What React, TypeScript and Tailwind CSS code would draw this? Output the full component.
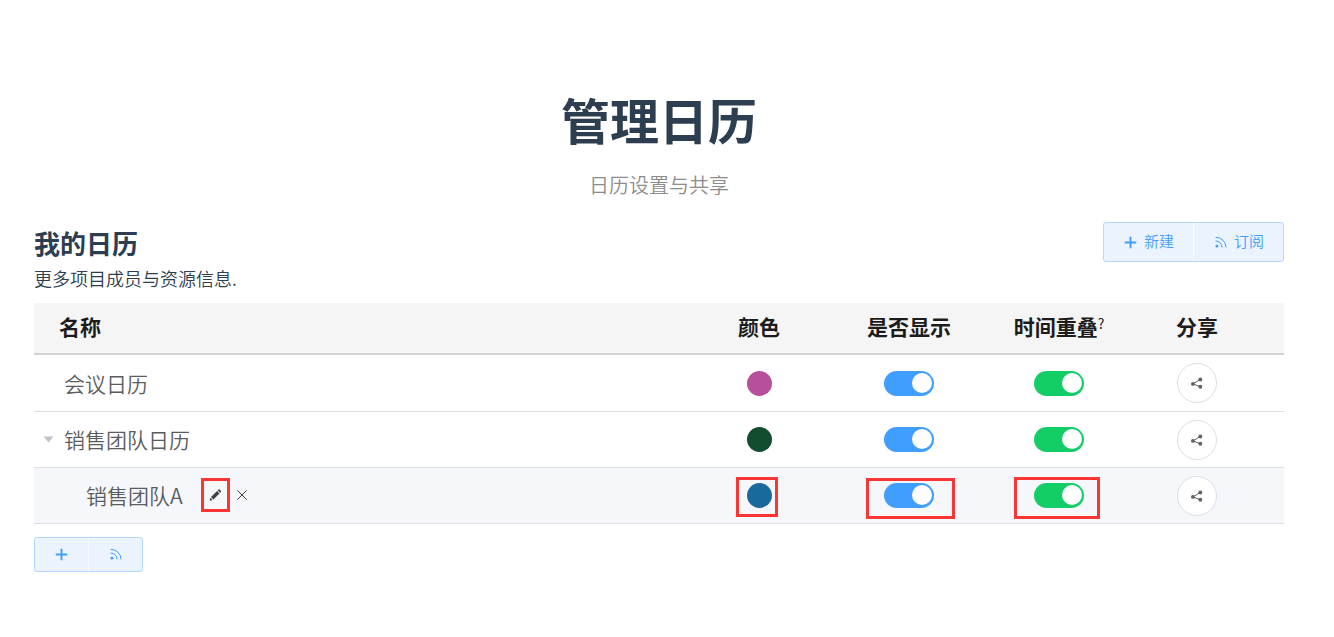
import { useState } from "react";

type Calendar = {
  name: string;
  dot: string;
  child?: boolean;
  expandable?: boolean;
};

const calendars: Calendar[] = [
  { name: "会议日历", dot: "bg-[#b84f9c]" },
  { name: "销售团队日历", dot: "bg-[#124d2f]", expandable: true },
  { name: "销售团队A", dot: "bg-[#1a699c]", child: true },
];

const PlusIcon = () => (
  <svg width="15" height="15" viewBox="0 0 15 15" fill="none" stroke="currentColor" strokeWidth="1.9" aria-hidden="true">
    <path d="M7.5 1.8v11.4M1.8 7.5h11.4" />
  </svg>
);

const FeedIcon = () => (
  <svg width="15" height="15" viewBox="0 0 15 15" fill="none" stroke="currentColor" strokeWidth="1" aria-hidden="true">
    <circle cx="3.9" cy="11.2" r="1.4" fill="currentColor" stroke="none" />
    <path d="M2.6 6a6.4 6.4 0 0 1 6.5 6.4M2.6 2.3a10.2 10.2 0 0 1 10.4 10.1" />
  </svg>
);

const PencilIcon = () => (
  <svg width="14" height="14" viewBox="0 0 14 14" fill="currentColor" aria-hidden="true">
    <path d="M.7 12.8l.7-3 2.3 2.3zM2 9.1l6.1-6.1 2.4 2.4-6.1 6.1zM8.7 2.4l.8-.8a.8.8 0 0 1 1.1 0l1.3 1.3a.8.8 0 0 1 0 1.1l-.8.8z" />
  </svg>
);

const CrossIcon = () => (
  <svg width="14" height="14" viewBox="0 0 14 14" fill="none" stroke="currentColor" strokeWidth="1" aria-hidden="true">
    <path d="M2.3 2.3l9.4 9.4M11.7 2.3l-9.4 9.4" />
  </svg>
);

const ShareIcon = () => (
  <svg width="14" height="14" viewBox="0 0 14 14" fill="currentColor" aria-hidden="true">
    <path d="M10.3 3.4L3 7.9l7.3 2.9" fill="none" stroke="currentColor" strokeWidth="1" />
    <circle cx="2.9" cy="7.9" r="1.9" />
    <circle cx="10.3" cy="3.4" r="2" />
    <circle cx="10.3" cy="10.8" r="2" />
  </svg>
);

function Toggle({ label, color }: { label: string; color: string }) {
  const [on, setOn] = useState(true);
  return (
    <input
      type="checkbox"
      role="switch"
      aria-label={label}
      checked={on}
      onChange={() => setOn(!on)}
      className={`block h-[25px] w-[50px] cursor-pointer appearance-none rounded-full bg-[#dcdfe6] p-0.5 before:block before:size-5 before:rounded-full before:bg-white checked:before:ml-[26px] ${color}`}
    />
  );
}

function Highlight({ className }: { className: string }) {
  return <span className={`pointer-events-none absolute border-3 border-[#fa3534] ${className}`} />;
}

function ButtonGroup({ compact = false }: { compact?: boolean }) {
  const size = compact ? "h-[33px]" : "h-[38px]";
  const button = `flex items-center justify-center gap-[6px] px-[19px] text-[15px] leading-5 font-[350] ${size}`;
  return (
    <div className="inline-flex overflow-hidden rounded-[3px] border border-[#b3d8ff] bg-[#ebf3ff] text-[#409eff]">
      <button type="button" aria-label="新建" className={`${button} border-r border-white/70`}>
        <PlusIcon />
        {!compact && <span className="pb-0.5">新建</span>}
      </button>
      <button type="button" aria-label="订阅" className={button}>
        <FeedIcon />
        {!compact && <span className="pb-0.5">订阅</span>}
      </button>
    </div>
  );
}

export default function App() {
  return (
    <main
      lang="zh-CN"
      className="pt-[84px] pr-[50px] pb-10 pl-[34px] font-['Noto_Sans_CJK_SC',sans-serif] text-[#2c3e50]"
    >
      <header className="text-center">
        <h1 className="text-[49px] leading-[70px] font-bold">管理日历</h1>
        <p className="mt-4 text-[20px] leading-[30px] font-[350] text-[#8c8c8c]">日历设置与共享</p>
      </header>

      <section className="mt-[22px]">
        <div className="flex items-start justify-between">
          <div>
            <h2 className="pt-[3px] text-[26px] leading-9 font-bold">我的日历</h2>
            <p className="pt-px text-[18px] leading-8 font-[350]">更多项目成员与资源信息.</p>
          </div>
          <ButtonGroup />
        </div>

        <table className="mt-[9px] w-full table-fixed border-separate border-spacing-0 text-[21px]">
          <colgroup>
            <col />
            <col className="w-[150px]" />
            <col className="w-[150px]" />
            <col className="w-[150px]" />
            <col className="w-[150px]" />
          </colgroup>
          <thead>
            <tr className="h-[52px] bg-[#f5f5f5] text-[#1c1c1c] [&>th]:border-b-2 [&>th]:border-[#d3d3d3] [&>th]:pb-1 [&>th]:leading-[30px]">
              <th scope="col" className="pl-[25px] text-left">名称</th>
              <th scope="col">颜色</th>
              <th scope="col">是否显示</th>
              <th scope="col">
                <span className="flex justify-center">
                  时间重叠
                  <sup className="top-0 pt-1 text-[14px] leading-4 font-normal">?</sup>
                </span>
              </th>
              <th scope="col" className="pr-6">分享</th>
            </tr>
          </thead>
          <tbody>
            {calendars.map((c) => (
              <tr
                key={c.name}
                className={`h-14 first:h-[57px] [&>td]:border-b [&>td]:border-[#dcdfe0] ${c.child ? "bg-[#f5f7fb]" : ""}`}
              >
                <td>
                  <div className="flex items-center leading-[30px] font-[350] text-[#5a5c60]">
                    {c.child ? (
                      <span className="w-[52px]" />
                    ) : (
                      <span className="flex w-[30px] pl-[9px]">
                        {c.expandable && (
                          <button type="button" aria-label="收起" className="text-[#c0c4cc]">
                            <svg width="11" height="7" viewBox="0 0 11 7" fill="currentColor" aria-hidden="true">
                              <path d="M0.5 0.5h10L5.5 6.5z" />
                            </svg>
                          </button>
                        )}
                      </span>
                    )}
                    <span className="pb-px">{c.name}</span>
                    {c.child && (
                      <span className="ml-[26px] flex gap-3 pb-px text-[#404040]">
                        <button type="button" aria-label="编辑" className="relative">
                          <PencilIcon />
                          <Highlight className="-top-[10px] -left-2 h-[34px] w-[29px]" />
                        </button>
                        <button type="button" aria-label="删除">
                          <CrossIcon />
                        </button>
                      </span>
                    )}
                  </div>
                </td>
                <td>
                  <div className="relative mx-auto size-[25px]">
                    <button
                      type="button"
                      aria-label={`${c.name}颜色`}
                      className={`block size-[25px] rounded-full ${c.dot}`}
                    />
                    {c.child && <Highlight className="-top-[6px] -left-[11px] h-10 w-[42px]" />}
                  </div>
                </td>
                <td>
                  <div className="relative mx-auto w-[50px]">
                    <Toggle label={`${c.name}是否显示`} color="checked:bg-[#409eff]" />
                    {c.child && <Highlight className="-top-[5px] -left-[18px] h-[41px] w-[89px]" />}
                  </div>
                </td>
                <td>
                  <div className="relative mx-auto w-[50px]">
                    <Toggle label={`${c.name}时间重叠`} color="checked:bg-[#13ce66]" />
                    {c.child && <Highlight className="-top-[6px] -left-5 h-[42px] w-[86px]" />}
                  </div>
                </td>
                <td className="pr-6">
                  <button
                    type="button"
                    aria-label={`分享${c.name}`}
                    className="mx-auto flex size-10 items-center justify-center rounded-full border border-[#dcdfe6] bg-white text-[#606266]"
                  >
                    <ShareIcon />
                  </button>
                </td>
              </tr>
            ))}
          </tbody>
        </table>

        <div className="mt-[13px] flex">
          <ButtonGroup compact />
        </div>
      </section>
    </main>
  );
}
